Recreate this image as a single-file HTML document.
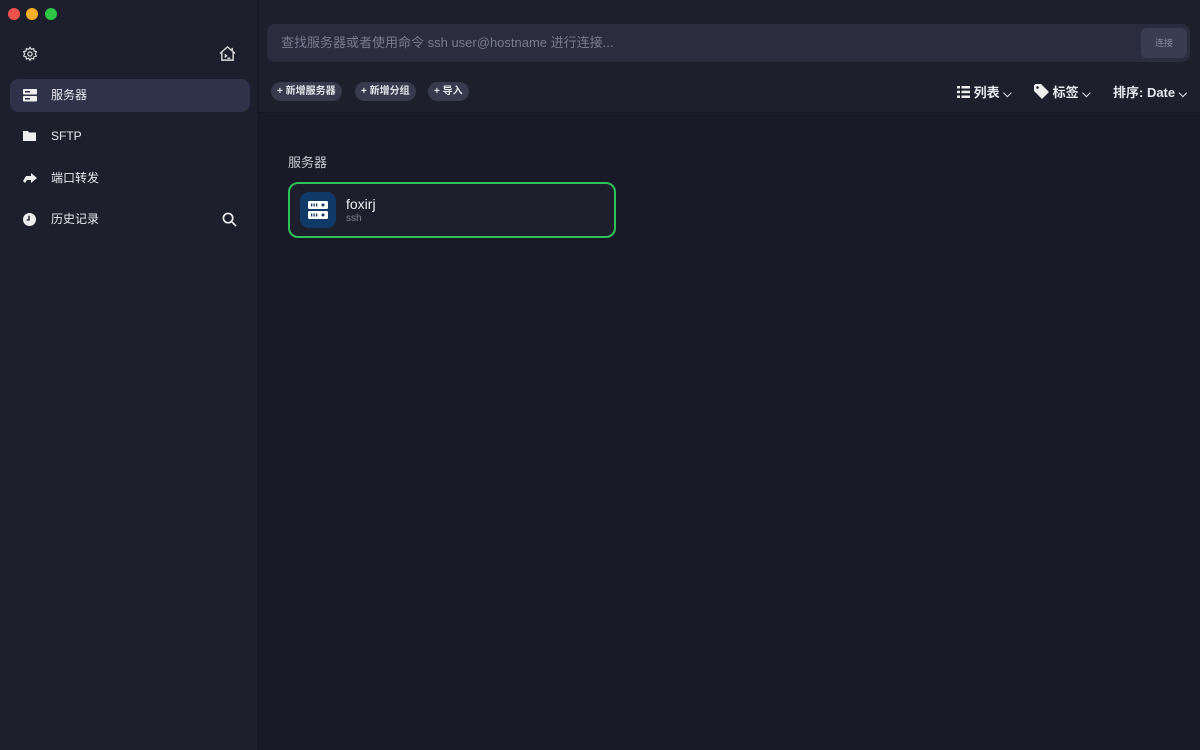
<!DOCTYPE html>
<html><head><meta charset="utf-8"><style>
*{margin:0;padding:0;box-sizing:border-box}
body{width:1200px;height:750px;background:#181a27;font-family:"Liberation Sans","Noto Sans CJK SC",sans-serif;color:#e8e9ef;position:relative;overflow:hidden}
.side{position:absolute;left:0;top:0;width:259px;height:750px;background:#1e1f2d;border-right:1px solid #14151f}
.dot{position:absolute;top:8px;width:12px;height:12px;border-radius:50%}
.top{position:absolute;left:259px;top:0;right:0;height:113px;background:#1e1f2d;border-bottom:1px solid #15161f}
.search{position:absolute;left:8px;top:24px;right:10px;height:38px;background:#2b2d3f;border-radius:8px;color:#7a7c8e;font-size:13px;line-height:38px;padding-left:14px}
.btn{position:absolute;right:3px;top:4px;width:46px;height:30px;background:#3a3c50;border-radius:6px;color:#888a9b;font-size:9px;text-align:center;line-height:30px}
.pill{position:absolute;top:82px;height:19px;background:#383a4d;border-radius:10px;font-size:10px;font-weight:bold;line-height:19px;padding:0 6px;color:#e4e5ea}
.item{position:absolute;left:10px;width:240px;height:33px;border-radius:9px;font-size:12px;line-height:33px;padding-left:41px}
.item svg{position:absolute;left:13px;top:10px}
.tb{position:absolute;top:82px;font-size:13px;font-weight:bold;color:#e8e9ef}
</style></head><body>
<div class="side">
<div class="dot" style="left:8px;background:#f0524b"></div>
<div class="dot" style="left:26px;background:#f5b126"></div>
<div class="dot" style="left:45px;background:#2ec544"></div>
<svg style="position:absolute;left:22px;top:46px" width="16" height="16" viewBox="0 0 24 24" fill="none" stroke="#ddd" stroke-width="1.8"><circle cx="12" cy="12" r="3.2"/><path d="M12 2l2 3 3.5-1 .5 3.5 3.5 1-1.5 3.5 1.5 3-3.5 1-.5 3.5-3.5-1-2 3-2-3-3.5 1-.5-3.5-3.5-1 1.5-3-1.5-3.5 3.5-1 .5-3.5 3.5 1z"/></svg>
<svg style="position:absolute;left:218px;top:45px" width="19" height="17" viewBox="0 0 20 18" fill="none" stroke="#ddd" stroke-width="1.5"><path d="M2 9L10 2l8 7M4 7v9h12V7M15 3v3"/><path d="M7 10l2 1.5-2 1.5M10 14h3"/></svg>
<div class="item" style="top:79px;background:#30324a">服务器<svg width="14" height="13" viewBox="0 0 14 13"><rect x="0" y="0" width="14" height="5.5" rx="1" fill="#eee"/><rect x="0" y="7" width="14" height="5.5" rx="1" fill="#eee"/><rect x="2" y="2" width="5" height="1.5" fill="#30324a"/><rect x="2" y="9" width="5" height="1.5" fill="#30324a"/></svg></div>
<div class="item" style="top:120px">SFTP<svg width="13" height="11" viewBox="0 0 13 11"><path d="M0 1h5l1 1.5h7V11H0z" fill="#eee"/></svg></div>
<div class="item" style="top:162px">端口转发<svg width="14" height="12" viewBox="0 0 14 12"><path d="M0 9l3-5h5V1l6 5-6 5V8H4L2 11z" fill="#eee"/></svg></div>
<div class="item" style="top:203px">历史记录<svg width="13" height="13" viewBox="0 0 14 14"><circle cx="7" cy="7" r="7" fill="#eee"/><path d="M6.5 3v4.5H4" stroke="#1e1f2d" stroke-width="1.5" fill="none"/></svg></div>
<svg style="position:absolute;left:222px;top:212px" width="15" height="15" viewBox="0 0 16 16" fill="none" stroke="#eee" stroke-width="1.8"><circle cx="6.5" cy="6.5" r="5"/><path d="M10 10l5 5"/></svg>
</div>
<div class="top">
<div class="search">查找服务器或者使用命令 ssh user@hostname 进行连接...<div class="btn">连接</div></div>
<div class="pill" style="left:12px">+ 新增服务器</div>
<div class="pill" style="left:96px">+ 新增分组</div>
<div class="pill" style="left:169px">+ 导入</div>
<div class="tb" style="left:698px"><svg width="13" height="12" viewBox="0 0 13 12" style="vertical-align:-1px"><g fill="#eee"><rect x="0" y="0" width="3" height="2.5"/><rect x="0" y="4.7" width="3" height="2.5"/><rect x="0" y="9.5" width="3" height="2.5"/><rect x="4.5" y="0" width="8.5" height="2.5"/><rect x="4.5" y="4.7" width="8.5" height="2.5"/><rect x="4.5" y="9.5" width="8.5" height="2.5"/></g></svg> 列表 <span style="font-size:11px">⌵</span></div>
<div class="tb" style="left:775px"><svg width="15" height="15" viewBox="0 0 15 15" style="vertical-align:-2px"><path d="M0 1.5V7l8 8 7-7-8-8H1.5z" fill="#eee"/><circle cx="3.5" cy="3.5" r="1.3" fill="#1e1f2d"/></svg> 标签 <span style="font-size:11px">⌵</span></div>
<div class="tb" style="left:854px">排序: Date <span style="font-size:11px">⌵</span></div>
</div>
<div style="position:absolute;left:288px;top:152px;font-size:13px;color:#c9cad3">服务器</div>
<div style="position:absolute;left:288px;top:182px;width:328px;height:56px;border:2px solid #2fc05a;border-radius:10px;background:#1e1f2d">
<div style="position:absolute;left:10px;top:8px;width:36px;height:36px;border-radius:9px;background:#0f3a68">
<svg style="position:absolute;left:8px;top:9px" width="20" height="18" viewBox="0 0 20 18"><rect width="20" height="8" rx="1.5" fill="#fff"/><rect y="10" width="20" height="8" rx="1.5" fill="#fff"/><g fill="#0f3a68"><rect x="3" y="2.5" width="1.3" height="3"/><rect x="5.5" y="2.5" width="1.3" height="3"/><rect x="8" y="2.5" width="1.3" height="3"/><circle cx="15" cy="4" r="1.5"/><rect x="3" y="12.5" width="1.3" height="3"/><rect x="5.5" y="12.5" width="1.3" height="3"/><rect x="8" y="12.5" width="1.3" height="3"/><circle cx="15" cy="14" r="1.5"/></g></svg></div>
<div style="position:absolute;left:56px;top:12px;font-size:14px;color:#f0f0f4">foxirj</div>
<div style="position:absolute;left:56px;top:29px;font-size:10px;color:#7f8192">ssh</div>
</div>
</body></html>
